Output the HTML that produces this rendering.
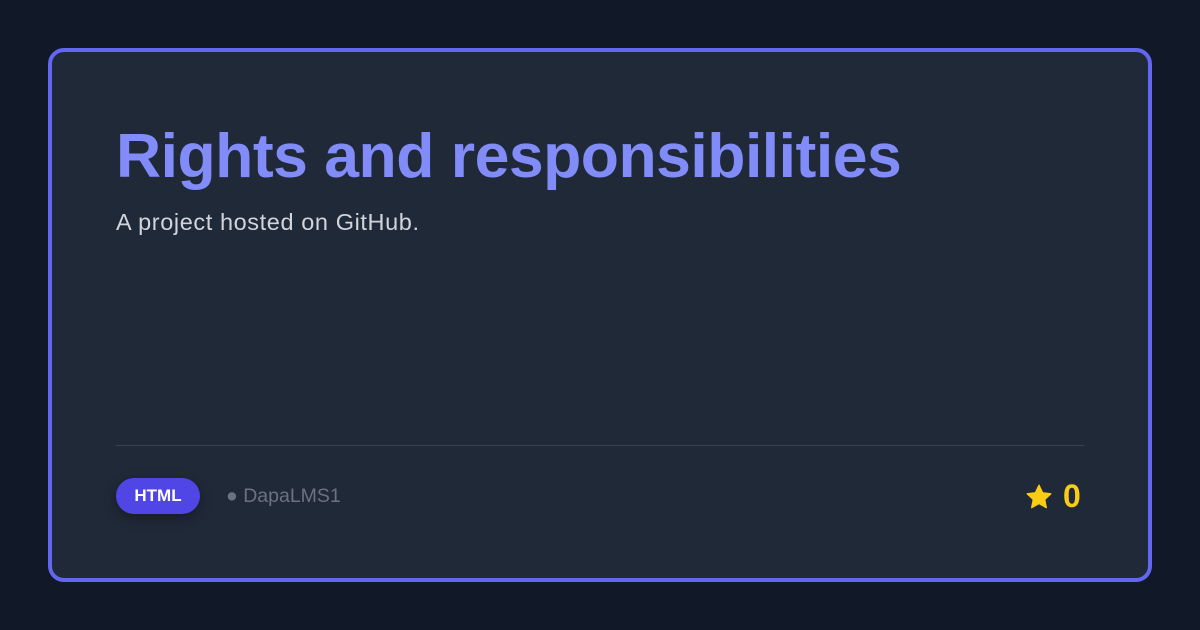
<!DOCTYPE html>
<html><head><style>
*{margin:0;padding:0;box-sizing:border-box}
body{width:1200px;height:630px;background:#111827;font-family:"Liberation Sans",sans-serif;position:relative;overflow:hidden}
.card{position:absolute;left:48px;top:48px;width:1104px;height:534px;border:4px solid #6366f1;border-radius:16px;background:#202938}
h1{position:absolute;left:64px;top:68px;font-size:62.5px;font-weight:700;color:#818cf8;letter-spacing:-0.5px;white-space:nowrap}
p.sub{position:absolute;left:64px;top:157px;font-size:23.5px;letter-spacing:0.6px;color:#d1d5db;white-space:nowrap}
.div{position:absolute;left:64px;top:393px;width:968px;height:1px;background:#374151}
.badge{position:absolute;left:64px;top:426px;width:84px;height:36px;border-radius:18px;background:#4f46e5;color:#fff;font-weight:700;font-size:17px;line-height:36px;text-align:center;box-shadow:0 4px 12px rgba(0,0,0,.3)}
.auth{position:absolute;left:174px;top:433px;font-size:19.5px;color:#6b7280}
.star{position:absolute;left:972px;top:430px;width:30px;height:30px}
.num{position:absolute;left:1011px;top:426px;font-size:32px;font-weight:700;color:#facc15}
</style></head><body>
<div class="card">
<h1>Rights and responsibilities</h1>
<p class="sub">A project hosted on GitHub.</p>
<div class="div"></div>
<div class="badge">HTML</div>
<div class="auth">● DapaLMS1</div>
<svg class="star" viewBox="0 0 24 24"><path d="M12 2.5l2.9 6.1 6.6.8-4.9 4.6 1.3 6.6L12 17.3l-5.9 3.3 1.3-6.6-4.9-4.6 6.6-.8z" fill="#facc15" stroke="#facc15" stroke-width="1" stroke-linejoin="round"/></svg>
<div class="num">0</div>
</div>
</body></html>
